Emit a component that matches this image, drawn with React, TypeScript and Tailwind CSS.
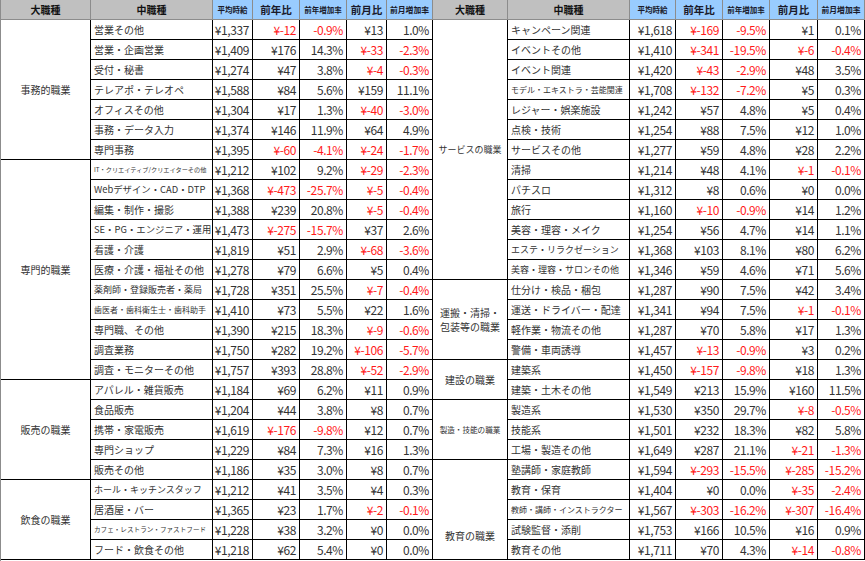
import type { ReactNode } from "react";

type Row = [string, number, number, number, number, number];

type Group = {
  label: ReactNode;
  labelClass: string;
  span: string;
  rows: Row[];
};

// names that Excel shrank to fit the cell
const nameSize: Record<string, string> = {
  "IT・クリエイティブ/クリエイターその他": "text-[6.2px]",
  "Webデザイン・CAD・DTP": "text-[9.4px]",
  "SE・PG・エンジニア・運用": "text-[9.4px]",
  "薬剤師・登録販売者・薬局": "text-[9px]",
  "歯医者・歯科衛生士・歯科助手": "text-[8px]",
  "ホール・キッチンスタッフ": "text-[9px]",
  "カフェ・レストラン・ファストフード": "text-[6.6px]",
  "モデル・エキストラ・芸能関連": "text-[8px]",
  "エステ・リラクゼーション": "text-[9px]",
  "美容・理容・サロンその他": "text-[9px]",
  "教師・講師・インストラクター": "text-[8px]",
};

const leftGroups: Group[] = [
  {
    label: "事務的職業",
    labelClass: "justify-center text-[10px]",
    span: "row-span-7",
    rows: [
      ["営業その他", 1337, -12, -0.9, 13, 1.0],
      ["営業・企画営業", 1409, 176, 14.3, -33, -2.3],
      ["受付・秘書", 1274, 47, 3.8, -4, -0.3],
      ["テレアポ・テレオペ", 1588, 84, 5.6, 159, 11.1],
      ["オフィスその他", 1304, 17, 1.3, -40, -3.0],
      ["事務・データ入力", 1374, 146, 11.9, 64, 4.9],
      ["専門事務", 1395, -60, -4.1, -24, -1.7],
    ],
  },
  {
    label: "専門的職業",
    labelClass: "justify-center text-[10px]",
    span: "row-span-11",
    rows: [
      ["IT・クリエイティブ/クリエイターその他", 1212, 102, 9.2, -29, -2.3],
      ["Webデザイン・CAD・DTP", 1368, -473, -25.7, -5, -0.4],
      ["編集・制作・撮影", 1388, 239, 20.8, -5, -0.4],
      ["SE・PG・エンジニア・運用", 1473, -275, -15.7, 37, 2.6],
      ["看護・介護", 1819, 51, 2.9, -68, -3.6],
      ["医療・介護・福祉その他", 1278, 79, 6.6, 5, 0.4],
      ["薬剤師・登録販売者・薬局", 1728, 351, 25.5, -7, -0.4],
      ["歯医者・歯科衛生士・歯科助手", 1410, 73, 5.5, 22, 1.6],
      ["専門職、その他", 1390, 215, 18.3, -9, -0.6],
      ["調査業務", 1750, 282, 19.2, -106, -5.7],
      ["調査・モニターその他", 1757, 393, 28.8, -52, -2.9],
    ],
  },
  {
    label: "販売の職業",
    labelClass: "justify-center text-[10px]",
    span: "row-span-5",
    rows: [
      ["アパレル・雑貨販売", 1184, 69, 6.2, 11, 0.9],
      ["食品販売", 1204, 44, 3.8, 8, 0.7],
      ["携帯・家電販売", 1619, -176, -9.8, 12, 0.7],
      ["専門ショップ", 1229, 84, 7.3, 16, 1.3],
      ["販売その他", 1186, 35, 3.0, 8, 0.7],
    ],
  },
  {
    label: "飲食の職業",
    labelClass: "justify-center text-[10px]",
    span: "row-span-4",
    rows: [
      ["ホール・キッチンスタッフ", 1212, 41, 3.5, 4, 0.3],
      ["居酒屋・バー", 1365, 23, 1.7, -2, -0.1],
      ["カフェ・レストラン・ファストフード", 1228, 38, 3.2, 0, 0.0],
      ["フード・飲食その他", 1218, 62, 5.4, 0, 0.0],
    ],
  },
];

const rightGroups: Group[] = [
  {
    label: "サービスの職業",
    labelClass: "justify-center text-[9px]",
    span: "row-span-[13]",
    rows: [
      ["キャンペーン関連", 1618, -169, -9.5, 1, 0.1],
      ["イベントその他", 1410, -341, -19.5, -6, -0.4],
      ["イベント関連", 1420, -43, -2.9, 48, 3.5],
      ["モデル・エキストラ・芸能関連", 1708, -132, -7.2, 5, 0.3],
      ["レジャー・娯楽施設", 1242, 57, 4.8, 5, 0.4],
      ["点検・技術", 1254, 88, 7.5, 12, 1.0],
      ["サービスその他", 1277, 59, 4.8, 28, 2.2],
      ["清掃", 1214, 48, 4.1, -1, -0.1],
      ["パチスロ", 1312, 8, 0.6, 0, 0.0],
      ["旅行", 1160, -10, -0.9, 14, 1.2],
      ["美容・理容・メイク", 1254, 56, 4.7, 14, 1.1],
      ["エステ・リラクゼーション", 1368, 103, 8.1, 80, 6.2],
      ["美容・理容・サロンその他", 1346, 59, 4.6, 71, 5.6],
    ],
  },
  {
    label: (
      <span className="text-center leading-[14px]">
        運搬・清掃・
        <br />
        包装等の職業
      </span>
    ),
    labelClass: "justify-center text-[10px]",
    span: "row-span-4",
    rows: [
      ["仕分け・検品・梱包", 1287, 90, 7.5, 42, 3.4],
      ["運送・ドライバー・配達", 1341, 94, 7.5, -1, -0.1],
      ["軽作業・物流その他", 1287, 70, 5.8, 17, 1.3],
      ["警備・車両誘導", 1457, -13, -0.9, 3, 0.2],
    ],
  },
  {
    label: "建設の職業",
    labelClass: "justify-center text-[10px]",
    span: "row-span-2",
    rows: [
      ["建築系", 1450, -157, -9.8, 18, 1.3],
      ["建築・土木その他", 1549, 213, 15.9, 160, 11.5],
    ],
  },
  {
    label: "製造・技能の職業",
    labelClass: "justify-center text-[7.6px]",
    span: "row-span-3",
    rows: [
      ["製造系", 1530, 350, 29.7, -8, -0.5],
      ["技能系", 1501, 232, 18.3, 82, 5.8],
      ["工場・製造その他", 1649, 287, 21.1, -21, -1.3],
    ],
  },
  {
    label: "教育の職業",
    labelClass: "justify-center pt-[52px] text-[10px]",
    span: "row-span-5",
    rows: [
      ["塾講師・家庭教師", 1594, -293, -15.5, -285, -15.2],
      ["教育・保育", 1404, 0, 0.0, -35, -2.4],
      ["教師・講師・インストラクター", 1567, -303, -16.2, -307, -16.4],
      ["試験監督・添削", 1753, 166, 10.5, 16, 0.9],
      ["教育その他", 1711, 70, 4.3, -14, -0.8],
    ],
  },
];

function Num({ v, pct }: { v: number; pct?: boolean }) {
  const text = pct ? `${v.toFixed(1)}%` : `¥${v.toLocaleString("en-US")}`;
  return (
    <div
      className={`flex items-center justify-end border-b border-r border-black pr-[3px] text-[12px] tracking-[-0.4px] ${
        v < 0 ? "text-[#ff1a1a]" : "text-[#333]"
      }`}
    >
      {text}
    </div>
  );
}

function Header() {
  const gray =
    "flex items-center justify-center border-b border-r border-[#8c8c8c] bg-[#c0c0c0] text-[10px] font-bold text-[#111]";
  const blue =
    "flex items-center justify-center border-b border-r border-[#8c8c8c] bg-[#99ccff] font-bold text-[#1a1a2a]";
  return (
    <>
      <div className={gray}>大職種</div>
      <div className={gray}>中職種</div>
      <div className={`${blue} text-[7.5px]`}>平均時給</div>
      <div className={`${blue} text-[10.5px]`}>前年比</div>
      <div className={`${blue} text-[7.5px]`}>前年増加率</div>
      <div className={`${blue} text-[10.5px]`}>前月比</div>
      <div className={`${blue} text-[7.8px]`}>前月増加率</div>
    </>
  );
}

function Table({ groups, cols }: { groups: Group[]; cols: string }) {
  return (
    <div className={`grid auto-rows-[20px] ${cols}`}>
      <Header />
      {groups.map((g, gi) => (
        <div key={gi} className="contents">
          <div
            className={`flex items-center whitespace-nowrap border-b border-r border-black text-[#333] ${g.span} ${g.labelClass}`}
          >
            {g.label}
          </div>
          {g.rows.map((r) => (
            <div key={r[0]} className="contents">
              <div
                className={`flex items-center overflow-hidden whitespace-nowrap border-b border-r border-black pl-[3px] text-[#333] ${
                  nameSize[r[0]] ?? "text-[10px]"
                }`}
              >
                {r[0]}
              </div>
              <Num v={r[1]} />
              <Num v={r[2]} />
              <Num v={r[3]} pct />
              <Num v={r[4]} />
              <Num v={r[5]} pct />
            </div>
          ))}
        </div>
      ))}
    </div>
  );
}

export default function App() {
  return (
    <div className="flex h-[561px] w-[865px] bg-white font-['Noto_Sans_CJK_JP',sans-serif]">
      <div className="border-l border-[#8c8c8c]">
        <Table
          groups={leftGroups}
          cols="grid-cols-[90px_122px_40px_47px_47px_40px_46px]"
        />
      </div>
      <Table
        groups={rightGroups}
        cols="grid-cols-[75px_122px_46px_47px_47px_48px_47px]"
      />
    </div>
  );
}
